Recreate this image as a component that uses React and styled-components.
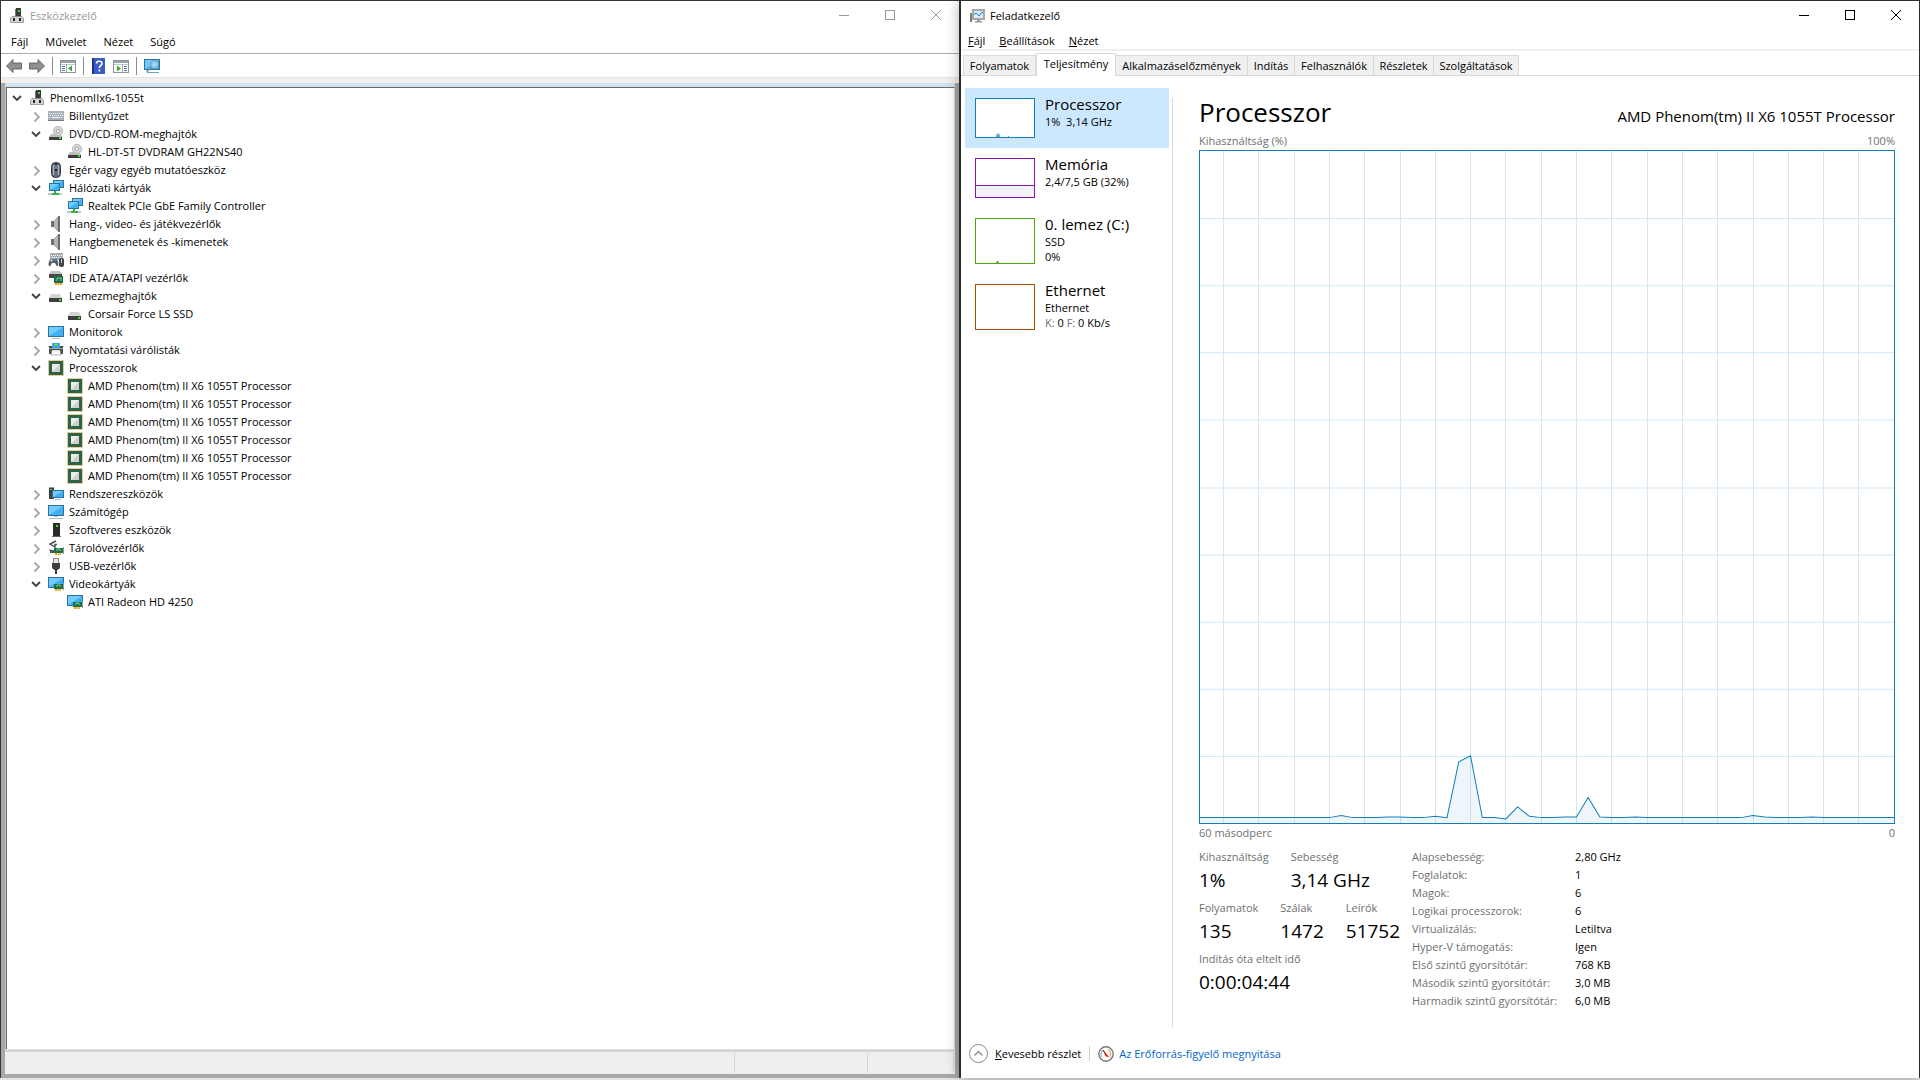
import React, { useState } from "react";
import styled, { createGlobalStyle } from "styled-components";

const Global = createGlobalStyle`
  * { box-sizing: border-box; }
  body { margin: 0; font-family: "Open Sans", "Noto Sans", sans-serif; font-size: 11px; color: #000; }
  button { font: inherit; color: inherit; background: none; border: 0; padding: 0; margin: 0; }
  ul { list-style: none; margin: 0; padding: 0; }
  h1, h2, p, dl, dd, dt { margin: 0; font-weight: 400; }
  svg { display: block; flex: none; }
`;

const Desktop = styled.div`
  display: grid;
  grid-template-columns: 1fr 1fr;
  gap: 2px;
  min-height: 100vh;
  padding: 1px 1px 0;
  background: #34382f;
  border-bottom: 2px solid #e4e4e4;
`;

const Window = styled.section`
  display: flex;
  flex-direction: column;
  min-width: 0;
  background: #fff;
  box-shadow: ${(p) => (p.$active ? "0 0 14px rgba(0, 0, 0, 0.4)" : "none")};
  z-index: ${(p) => (p.$active ? 1 : 0)};
`;

const TitleBar = styled.header`
  display: flex;
  align-items: center;
  height: 30px;
  padding-left: 8px;
  color: ${(p) => (p.$active ? "#000" : "#999")};
`;

const Title = styled.h1`
  flex: 1;
  padding: 0 0 2px 5px;
  font-size: 11px;
`;

const WindowButton = styled.button`
  display: grid;
  place-items: center;
  width: 46px;
  height: 30px;
  padding-bottom: 2px;
`;

const MenuBar = styled.nav`
  display: flex;
  align-items: center;
  height: ${(p) => p.$height}px;
  padding: 0 0 ${(p) => p.$bottom}px ${(p) => p.$start}px;
  gap: ${(p) => p.$gap}px;
  border-bottom: ${(p) => p.$line};
`;

/* Device manager */

const Toolbar = styled.div`
  display: flex;
  align-items: center;
  gap: 7px;
  height: 23px;
  padding-left: 5px;
`;

const ToolButton = styled.button`
  display: grid;
  place-items: center;
  min-width: 15px;
`;

const ToolSeparator = styled.span`
  width: 1px;
  height: 18px;
  background: #8c8c8c;
`;

const ToolBand = styled.div`
  height: 6px;
  background: #f0f0f0;
  border-top: 1px solid #e3e3e3;
`;

const Frame = styled.div`
  flex: 1;
  display: flex;
  flex-direction: column;
  padding: 0 4px 4px;
  background: #a8a8a8;
`;

const TreePane = styled.div`
  flex: 1;
  background: #fff;
  border-top: 4px solid #d3e0ee;
  border-left: 1px solid #c4c4c4;
  border-bottom: 1px solid #dcdcdc;
`;

const TreeList = styled.ul`
  height: 100%;
  padding-left: 2px;
  border-top: 1px solid #696969;
  border-left: 1px solid #696969;
  border-right: 1px solid #d8d8d8;
`;

const TreeRow = styled.li`
  display: flex;
  align-items: center;
  height: 18px;
  padding-left: ${(p) => p.$level * 19}px;
  white-space: nowrap;
  svg { margin-top: 2px; }
`;

const Expander = styled.button`
  display: grid;
  place-items: center;
  width: 16px;
  height: 16px;
  margin-right: 4px;
  visibility: ${(p) => (p.$leaf ? "hidden" : "visible")};
`;

const TreeLabel = styled.span`
  margin-left: 5px;
`;

const StatusBar = styled.footer`
  display: grid;
  grid-template-columns: 1fr 133px 86px;
  height: 24px;
  padding: 1px 1px 1px 0;
  background: #efefef;
  border-top: 2px solid #d4d4d4;
`;

const StatusCell = styled.span`
  border-right: 1px solid #d4d4d4;
`;

/* Task manager */

const Tabs = styled.div`
  display: flex;
  align-items: flex-end;
  height: 25px;
  padding-left: 2px;
  border-bottom: 1px solid #d9d9d9;
`;

const Tab = styled.button`
  height: ${(p) => (p.$active ? 23 : 20)}px;
  width: ${(p) => p.$width}px;
  margin-bottom: ${(p) => (p.$active ? -1 : 0)}px;
  padding-bottom: ${(p) => (p.$active ? 3 : 1)}px;
  white-space: nowrap;
  background: ${(p) => (p.$active ? "#fff" : "#f0f0f0")};
  border: 1px solid #d9d9d9;
  border-bottom: 0;
  border-left-width: ${(p) => (p.$first || p.$active ? 1 : 0)}px;
`;

const Body = styled.div`
  flex: 1;
  display: flex;
  padding: 12px 24px 0 4px;
`;

const Side = styled.ul`
  width: 204px;
`;

const SideButton = styled.button`
  display: flex;
  align-items: flex-start;
  gap: 10px;
  width: 100%;
  padding: 10px;
  text-align: left;
  background: ${(p) => (p.$selected ? "#cce8ff" : "transparent")};
`;

const SideText = styled.span`
  display: flex;
  flex-direction: column;
  margin-top: -4px;
  line-height: 15px;
  white-space: pre;
`;

const SideName = styled.span`
  font-size: 15px;
  line-height: 20px;
`;

const Muted = styled.span`
  color: #707070;
`;

const Divider = styled.div`
  width: 1px;
  margin: 10px 26px 0 3px;
  background: #d9d9d9;
`;

const Main = styled.main`
  flex: 1;
  display: flex;
  flex-direction: column;
  min-width: 0;
`;

const Heading = styled.div`
  display: flex;
  justify-content: space-between;
  align-items: baseline;
  height: 44px;
  line-height: 48px;
`;

const HeadingTitle = styled.h2`
  font-size: 26px;
`;

const HeadingModel = styled.p`
  font-size: 15px;
`;

const AxisRow = styled.div`
  display: flex;
  justify-content: space-between;
  line-height: 18px;
  color: #707070;
`;

const ChartBox = styled.div`
  flex: 1;
  display: flex;
  min-height: 300px;
  border: 1px solid #117dbb;
`;

const Stats = styled.div`
  display: flex;
  height: 185px;
  padding-top: 6px;
`;

const Figures = styled.dl`
  width: 213px;
`;

const FigureRow = styled.div`
  display: flex;
  gap: 22px;
  height: 51px;
`;

const Figure = styled.div`
  line-height: 18px;
`;

const FigureLabel = styled.dt`
  color: #707070;
`;

const FigureValue = styled.dd`
  font-size: 19px;
  line-height: 28px;
`;

const Details = styled.table`
  align-self: flex-start;
  border-collapse: collapse;
  th { width: 163px; font-weight: 400; text-align: left; color: #707070; }
  th, td { height: 18px; padding: 0; line-height: 18px; white-space: nowrap; }
`;

const Footer = styled.footer`
  display: flex;
  align-items: center;
  height: 51px;
  padding: 2px 0 0 8px;
`;

const FewerButton = styled.button`
  display: flex;
  align-items: center;
  gap: 7px;
`;

const FooterLine = styled.span`
  width: 1px;
  height: 15px;
  margin: 0 8px;
  background: #d0d0d0;
`;

const MonitorLink = styled.a`
  display: flex;
  align-items: center;
  gap: 5px;
  color: #0066cc;
  text-decoration: none;
`;

/* Icons, drawn on a 16 x 16 grid */

const Svg = ({ children, size = 16 }) => (
  <svg width={size} height={size} viewBox="0 0 16 16" aria-hidden="true">{children}</svg>
);

const Screen = ({ x = 0, y = 2, w = 16, h = 10 }) => (
  <>
    <rect x={x} y={y} width={w} height={h} fill="#2d7396" />
    <rect x={x + 1} y={y + 1} width={w - 2} height={h - 2} fill="#3fb0f5" />
    <path d={`M${x + 1} ${y + 1}h${w - 2}L${x + 1} ${y + h - 1}z`} fill="#72cbfb" />
  </>
);

const Card = () => (
  <>
    <rect x="6" y="8" width="9" height="5" fill="#1e6f43" />
    <path d="M15.500 7v7" stroke="#9a9a9a" />
    <path d="M9 11V9h3v2" fill="none" stroke="#6fd09a" />
    <path d="M7 14h6" stroke="#f3a41b" strokeWidth="2" strokeDasharray="2 .5" />
  </>
);

const icons = {
  computer: (
    <>
      <rect x="7" y="0" width="5" height="9" fill="#3a3a3a" />
      <path d="M6.500 1v8" stroke="#777" />
      <rect x="9" y="2" width="2" height="2" fill="#3ddb3d" />
      <path d="M3 8.500h10l1.500 2v4h-13v-4z" fill="#d3d5d8" stroke="#8b8b8b" strokeWidth=".8" />
      <rect x="4" y="10" width="2" height="3" fill="#222" />
      <rect x="10" y="10" width="2" height="3" fill="#222" />
    </>
  ),
  keyboard: (
    <>
      <rect y="3" width="16" height="10" fill="#6f7a83" />
      <rect y="3" width="16" height="9" fill="#a9b3bb" />
      <path d="M1 5.500h14M2 7.500h13M1 9.500h2M13 9.500h2" stroke="#f4f6f7" strokeDasharray="1 1" />
      <path d="M4 9.500h8" stroke="#f4f6f7" />
    </>
  ),
  dvd: (
    <>
      <circle cx="10" cy="5" r="4.700" fill="#d3d3d3" stroke="#a5a5a5" strokeWidth=".6" />
      <circle cx="10" cy="5" r="1.600" fill="#fff" stroke="#909090" strokeWidth=".7" />
      <path d="M3 8h5l2 1h3l1 2H1z" fill="#bcbcbc" />
      <rect x="1" y="11" width="13" height="3" fill="#3d3d3d" />
      <rect x="11" y="11" width="2" height="2" fill="#36e04c" />
    </>
  ),
  mouse: (
    <>
      <rect x="3.500" y=".5" width="9" height="15" rx="4" fill="#66707b" stroke="#30353b" />
      <path d="M5.500 3v10M10.500 3v10" stroke="#aeb8c2" />
      <rect x="7" y="1" width="2" height="8" fill="#1d2126" />
      <rect x="7.500" y="3" width="1" height="4" fill="#d2dae2" />
    </>
  ),
  network: (
    <>
      <Screen x={5} y={0} w={11} h={8} />
      <Screen x={1} y={3} w={11} h={8} />
      <path d="M0 14h14" stroke="#c4c4c4" strokeWidth="2" />
      <path d="M7 11v3M4 14h7" stroke="#37b04a" strokeWidth="2" />
    </>
  ),
  speaker: (
    <>
      <path d="M3 5h3v6H3z" fill="#6f6f6f" />
      <path d="M6 5l4-4v14l-4-4z" fill="#b8b8b8" stroke="#8f8f8f" strokeWidth=".6" />
      <rect x="10" y="0" width="2" height="16" fill="#6d6d6d" />
    </>
  ),
  hid: (
    <>
      <rect x="2" y="1" width="13" height="7" fill="#a9adb1" />
      <path d="M3 3.500h11M4 5.500h10" stroke="#fff" strokeDasharray="1 1" />
      <path d="M1 14c-1-1 0-7 2-7h5c2 0 3 6 2 7s-2-1-3-3H4c-1 2-2 4-3 3z" fill="#596069" />
      <circle cx="3.500" cy="8.500" r="1" fill="#e9eef3" />
      <circle cx="6.500" cy="7.500" r="1" fill="#2a9be8" />
      <rect x="11" y="6" width="5" height="9" rx="2" fill="#3d444c" />
      <path d="M13.500 7v4" stroke="#cdd5dc" />
    </>
  ),
  ide: (
    <>
      <path d="M3 1h9l2 3H1z" fill="#c4c4c4" />
      <rect x="1" y="4" width="13" height="4" fill="#474747" />
      <rect x="6" y="6" width="9" height="7" fill="#1e6f43" />
      <path d="M9 11V8h4v3" fill="none" stroke="#6fd09a" />
      <path d="M7 14h7" stroke="#f3a41b" strokeWidth="2" strokeDasharray="2 .5" />
    </>
  ),
  drive: (
    <>
      <path d="M3 6h9l2 4H1z" fill="#d3d3d3" />
      <rect x="1" y="10" width="13" height="4" fill="#3d3d3d" />
      <rect x="11" y="11" width="2" height="2" fill="#36e04c" />
    </>
  ),
  monitor: (
    <>
      <Screen y={2} h={11} />
      <path d="M4 14.500h8" stroke="#9ec3d8" />
    </>
  ),
  printer: (
    <>
      <path d="M0 4.500h4M12 4.500h4" stroke="#aeb3b8" />
      <path d="M1 4h14v8H1z" fill="#4b5056" />
      <rect x="4" y="1" width="8" height="5" fill="#3fa6ee" />
      <path d="M6 2h4v2H6z" fill="#59cf56" />
      <rect x="1" y="6" width="14" height="1" fill="#9da2a7" />
      <path d="M4 8h8l1 5H3z" fill="#fff" stroke="#777" strokeWidth=".6" />
    </>
  ),
  cpu: (
    <>
      <rect x=".5" y=".5" width="15" height="15" fill="none" stroke="#c89a3a" strokeDasharray="1 1" />
      <rect x="1" y="1" width="14" height="14" fill="#2d6448" />
      <rect x="4" y="4" width="8" height="8" fill="#cfcfcf" />
      <path d="M4 4h8L4 12z" fill="#ebebeb" />
    </>
  ),
  system: (
    <>
      <rect x="1" y="1" width="5" height="12" fill="#404040" />
      <path d="M1 1.500h5" stroke="#999" />
      <rect x="2" y="3" width="2" height="1" fill="#36e04c" />
      <Screen x={4} y={4} w={12} h={8} />
      <path d="M7 13.500h6" stroke="#9ec3d8" />
    </>
  ),
  pc: (
    <>
      <Screen y={1} h={11} />
      <path d="M6 12.500h4M1 14.500h14" stroke="#a9bccb" />
    </>
  ),
  software: (
    <>
      <rect x="5" y="1" width="7" height="13" fill="#2b2b2b" />
      <rect x="8" y="3" width="2" height="2" fill="#36e04c" />
      <path d="M4 14.500h9" stroke="#666" />
    </>
  ),
  storage: (
    <>
      <path d="M8 1L2 4l5 3V4.500h2" fill="none" stroke="#4b4b4b" strokeWidth="1.400" />
      <path d="M2 9l3 2H1z" fill="#777" />
      <rect x="2" y="10" width="6" height="3" fill="#555" />
      <Card />
    </>
  ),
  usb: (
    <>
      <rect x="5.500" y=".5" width="5" height="5" fill="#e5e5e5" stroke="#8a8a8a" />
      <path d="M4 5h8v4c0 2-2 2-2.500 3h-3C6 11 4 11 4 9z" fill="#3c3c3c" />
      <rect x="7" y="11" width="2" height="5" fill="#3c3c3c" />
    </>
  ),
  video: (
    <>
      <Screen y={1} h={11} />
      <Card />
    </>
  ),
};

const Chevron = ({ open }) => (
  <svg width="12" height="12" viewBox="0 0 12 12" aria-hidden="true">
    <path
      d={open ? "M2 4l4 4 4-4" : "M4.500 2.500L9 7l-4.500 4.500"}
      fill="none"
      stroke={open ? "#404040" : "#a6a6a6"}
      strokeWidth="1.800"
    />
  </svg>
);

const WindowButtons = () => (
  <>
    <WindowButton aria-label="Kis méret">
      <svg width="10" height="10"><path d="M0 5.500h10" stroke="currentColor" /></svg>
    </WindowButton>
    <WindowButton aria-label="Teljes méret">
      <svg width="10" height="10"><rect x=".5" y=".5" width="9" height="9" fill="none" stroke="currentColor" /></svg>
    </WindowButton>
    <WindowButton aria-label="Bezárás">
      <svg width="10" height="10"><path d="M0 0l10 10M10 0L0 10" stroke="currentColor" /></svg>
    </WindowButton>
  </>
);

const Arrow = ({ back }) => (
  <Svg>
    <path
      d="M.5 8L7 1.500v3.500h8.500v6H7v3.500z"
      transform={back ? undefined : "matrix(-1 0 0 1 16 0)"}
      fill="#909090"
      stroke="#5f5f5f"
      strokeWidth=".9"
    />
  </Svg>
);

const PanelIcon = ({ right }) => (
  <Svg>
    <rect x=".5" y="2.500" width="15" height="12" fill="#fff" stroke="#8d949c" />
    <path d="M1 4h14" stroke="#9ba3ab" strokeWidth="2" />
    <path d="M1 6.500h14" stroke="#c3c9cf" />
    <path d={right ? "M9.500 6v8" : "M6.500 6v8"} stroke="#a3a9af" />
    <path d={right ? "M11 8.500h3M11 10.500h3M11 12.500h3" : "M2 8.500h3M2 10.500h3M2 12.500h3"} stroke="#5b7ea6" />
    <path d={right ? "M4 7.500l4 3-4 3z" : "M12 7.500l-4 3 4 3z"} fill="#35a935" />
  </Svg>
);

const HelpIcon = () => (
  <svg width="13" height="16" viewBox="0 0 13 16" aria-hidden="true">
    <rect width="13" height="16" fill="#3a5cc4" />
    <path d="M1 0v16" stroke="#1d3580" strokeWidth="2" />
    <path d="M4.500 5.500c0-3 5.500-3 5.500 0 0 2-2.600 2-2.600 4.500M7.400 11.500v2" fill="none" stroke="#fff" strokeWidth="1.600" />
  </svg>
);

const ScanIcon = () => (
  <Svg>
    <Screen y={1} h={11} />
    <path d="M3 14.500h12" stroke="#6ba3c4" />
    <circle cx="10.500" cy="6.500" r="4" fill="#8fd4fc" stroke="#7c8b95" />
    <path d="M7.500 9.500L2.500 14" stroke="#7c8b95" strokeWidth="1.600" />
  </Svg>
);

const TaskIcon = () => (
  <Svg>
    <path d="M1 5h2v9H1z" fill="#7d7d7d" />
    <path d="M1.500 5v2" stroke="#42c842" />
    <rect x="4" y="2" width="11" height="9" fill="#d8f0fb" stroke="#a6a6a6" strokeWidth="2" />
    <path d="M5 6.500L7 5l3 3 3-4 1 1" fill="none" stroke="#1587c9" />
    <path d="M8 12h3v1h2v1.500H6V13h2z" fill="#9a9a9a" />
  </Svg>
);

const GaugeIcon = () => (
  <Svg>
    <circle cx="8" cy="8" r="7.200" fill="#fff" stroke="#7a7a7a" strokeWidth="1.400" />
    <path d="M4 11a5 5 0 0 1 1-7" fill="none" stroke="#74b7d9" strokeWidth="1.200" />
    <path d="M10 3.800a5 5 0 0 1 1.500 7.500" fill="none" stroke="#f09a3c" strokeWidth="1.200" />
    <path d="M5 4l5 6.500-2-.5z" fill="#d81e1e" stroke="#d81e1e" />
  </Svg>
);

/* Content */

const cpuName = "AMD Phenom(tm) II X6 1055T Processor";

const devices = [
  ["Billentyűzet", "keyboard"],
  ["DVD/CD-ROM-meghajtók", "dvd", ["HL-DT-ST DVDRAM GH22NS40"]],
  ["Egér vagy egyéb mutatóeszköz", "mouse"],
  ["Hálózati kártyák", "network", ["Realtek PCIe GbE Family Controller"]],
  ["Hang-, video- és játékvezérlők", "speaker"],
  ["Hangbemenetek és -kimenetek", "speaker"],
  ["HID", "hid"],
  ["IDE ATA/ATAPI vezérlők", "ide"],
  ["Lemezmeghajtók", "drive", ["Corsair Force LS SSD"]],
  ["Monitorok", "monitor"],
  ["Nyomtatási várólisták", "printer"],
  ["Processzorok", "cpu", Array(6).fill(cpuName)],
  ["Rendszereszközök", "system"],
  ["Számítógép", "pc"],
  ["Szoftveres eszközök", "software"],
  ["Tárolóvezérlők", "storage"],
  ["USB-vezérlők", "usb"],
  ["Videokártyák", "video", ["ATI Radeon HD 4250"]],
];

const tabs = [
  ["Folyamatok", 73],
  ["Teljesítmény", 80],
  ["Alkalmazáselőzmények", 132],
  ["Indítás", 47],
  ["Felhasználók", 79],
  ["Részletek", 60],
  ["Szolgáltatások", 85],
];

const details = [
  ["Alapsebesség:", "2,80 GHz"],
  ["Foglalatok:", "1"],
  ["Magok:", "6"],
  ["Logikai processzorok:", "6"],
  ["Virtualizálás:", "Letiltva"],
  ["Hyper-V támogatás:", "Igen"],
  ["Első szintű gyorsítótár:", "768 KB"],
  ["Második szintű gyorsítótár:", "3,0 MB"],
  ["Harmadik szintű gyorsítótár:", "6,0 MB"],
];

/* CPU load in percent, one sample each second, oldest first */
const load = Array(60).fill(0.8);
Object.assign(load, {
  12: 1.1, 16: 0.9, 17: 0.9, 20: 1, 22: 9.1, 23: 10, 26: 0.6, 27: 2.4, 28: 1,
  31: 0.9, 32: 0.9, 33: 3.8, 34: 0.9, 37: 0.9, 47: 1.1, 48: 0.9, 52: 0.9,
});

const Chart = () => {
  const points = load.map((v, i) => `${(i * 694) / 59},${671 - v * 6.71}`).join(" ");
  return (
    <svg width="100%" height="100%" viewBox="0 0 694 671" preserveAspectRatio="none" role="img" aria-label="Kihasználtság">
      <g stroke="#d3e8f5">
        {Array.from({ length: 9 }, (_, i) => (
          <path key={i} d={`M0 ${Math.round((i + 1) * 67.1) + 0.5}H694`} />
        ))}
        {Array.from({ length: 19 }, (_, i) => (
          <path key={i} d={`M${Math.round(23 + i * 35.3) + 0.5} 0V671`} />
        ))}
      </g>
      <polygon points={`0,671 ${points} 694,671`} fill="#117dbb" fillOpacity=".07" />
      <polyline points={points} fill="none" stroke="#117dbb" />
    </svg>
  );
};

const Thumb = ({ color, height, children }) => (
  <svg width="60" height={height} viewBox={`0 0 60 ${height}`} aria-hidden="true">
    <rect x=".5" y=".5" width="59" height={height - 1} fill="#fff" stroke={color} />
    {children}
  </svg>
);

const resources = [
  {
    name: "Processzor",
    lines: ["1%  3,14 GHz"],
    thumb: (
      <Thumb color="#117dbb" height={40}>
        <path d="M21 39l1-3h2l1 3z" fill="#6ab0d8" stroke="#4a9fce" strokeWidth=".6" />
        <path d="M33 38.500h1" stroke="#4a9fce" />
      </Thumb>
    ),
  },
  {
    name: "Memória",
    lines: ["2,4/7,5 GB (32%)"],
    thumb: (
      <Thumb color="#8b12ae" height={40}>
        <rect x="1" y="28" width="58" height="11" fill="#f4f2f4" />
        <path d="M1 27.500h58" stroke="#8b12ae" />
      </Thumb>
    ),
  },
  {
    name: "0. lemez (C:)",
    lines: ["SSD", "0%"],
    thumb: (
      <Thumb color="#4da60c" height={46}>
        <path d="M21 45l1-2h1l1 2z" fill="#4da60c" />
      </Thumb>
    ),
  },
  {
    name: "Ethernet",
    lines: ["Ethernet", <><Muted>K:</Muted> 0 <Muted>F:</Muted> 0 Kb/s</>],
    thumb: <Thumb color="#a74f01" height={46} />,
  },
];

const DeviceGroup = ({ name, icon, items }) => {
  const [open, setOpen] = useState(Boolean(items));
  return (
    <>
      <TreeRow $level={1}>
        <Expander aria-label={name} aria-expanded={open} onClick={() => setOpen(!open)}>
          <Chevron open={open} />
        </Expander>
        <Svg>{icons[icon]}</Svg>
        <TreeLabel>{name}</TreeLabel>
      </TreeRow>
      {open && items && items.map((item, i) => (
        <TreeRow key={i} $level={2}>
          <Expander as="span" $leaf />
          <Svg>{icons[icon]}</Svg>
          <TreeLabel>{item}</TreeLabel>
        </TreeRow>
      ))}
    </>
  );
};

const DeviceManager = () => (
  <Window>
    <TitleBar>
      <Svg>{icons.computer}</Svg>
      <Title>Eszközkezelő</Title>
      <WindowButtons />
    </TitleBar>
    <MenuBar $height={23} $start={10} $bottom={2} $gap={17} $line="1px solid #a9adb0">
      {["Fájl", "Művelet", "Nézet", "Súgó"].map((m) => <button key={m}>{m}</button>)}
    </MenuBar>
    <Toolbar>
      <ToolButton aria-label="Vissza"><Arrow back /></ToolButton>
      <ToolButton aria-label="Előre"><Arrow /></ToolButton>
      <ToolSeparator />
      <ToolButton aria-label="Konzolfa"><PanelIcon /></ToolButton>
      <ToolSeparator />
      <ToolButton aria-label="Súgó megnyitása"><HelpIcon /></ToolButton>
      <ToolButton aria-label="Műveletpanel"><PanelIcon right /></ToolButton>
      <ToolSeparator />
      <ToolButton aria-label="Hardverváltozások keresése"><ScanIcon /></ToolButton>
    </Toolbar>
    <ToolBand />
    <Frame>
      <TreePane>
        <TreeList>
          <TreeRow $level={0}>
            <Expander aria-label="PhenomIIx6-1055t" aria-expanded="true"><Chevron open /></Expander>
            <Svg>{icons.computer}</Svg>
            <TreeLabel>PhenomIIx6-1055t</TreeLabel>
          </TreeRow>
          {devices.map(([name, icon, items]) => (
            <DeviceGroup key={name} name={name} icon={icon} items={items} />
          ))}
        </TreeList>
      </TreePane>
      <StatusBar><StatusCell /><StatusCell /><StatusCell /></StatusBar>
    </Frame>
  </Window>
);

const TaskManager = () => {
  const [selected, setSelected] = useState(0);
  return (
    <Window $active>
      <TitleBar $active>
        <TaskIcon />
        <Title>Feladatkezelő</Title>
        <WindowButtons />
      </TitleBar>
      <MenuBar $height={20} $start={7} $bottom={0} $gap={14} $line="2px solid #f0f0f0">
        {["Fájl", "Beállítások", "Nézet"].map((m) => <button key={m}><u>{m[0]}</u>{m.slice(1)}</button>)}
      </MenuBar>
      <Tabs role="tablist">
        {tabs.map(([name, width], i) => (
          <Tab key={name} role="tab" aria-selected={i === 1} $active={i === 1} $first={i === 0} $width={width}>
            {name}
          </Tab>
        ))}
      </Tabs>
      <Body>
        <Side>
          {resources.map((r, i) => (
            <li key={r.name}>
              <SideButton $selected={i === selected} onClick={() => setSelected(i)}>
                {r.thumb}
                <SideText>
                  <SideName>{r.name}</SideName>
                  {r.lines.map((line, n) => <span key={n}>{line}</span>)}
                </SideText>
              </SideButton>
            </li>
          ))}
        </Side>
        <Divider />
        <Main>
          <Heading>
            <HeadingTitle>Processzor</HeadingTitle>
            <HeadingModel>{cpuName}</HeadingModel>
          </Heading>
          <AxisRow><span>Kihasználtság (%)</span><span>100%</span></AxisRow>
          <ChartBox><Chart /></ChartBox>
          <AxisRow><span>60 másodperc</span><span>0</span></AxisRow>
          <Stats>
            <Figures>
              <FigureRow>
                <Figure><FigureLabel>Kihasználtság</FigureLabel><FigureValue>1%</FigureValue></Figure>
                <Figure><FigureLabel>Sebesség</FigureLabel><FigureValue>3,14 GHz</FigureValue></Figure>
              </FigureRow>
              <FigureRow>
                <Figure><FigureLabel>Folyamatok</FigureLabel><FigureValue>135</FigureValue></Figure>
                <Figure><FigureLabel>Szálak</FigureLabel><FigureValue>1472</FigureValue></Figure>
                <Figure><FigureLabel>Leírók</FigureLabel><FigureValue>51752</FigureValue></Figure>
              </FigureRow>
              <FigureRow>
                <Figure><FigureLabel>Indítás óta eltelt idő</FigureLabel><FigureValue>0:00:04:44</FigureValue></Figure>
              </FigureRow>
            </Figures>
            <Details>
              <tbody>
                {details.map(([k, v]) => <tr key={k}><th scope="row">{k}</th><td>{v}</td></tr>)}
              </tbody>
            </Details>
          </Stats>
        </Main>
      </Body>
      <Footer>
        <FewerButton>
          <svg width="19" height="19" viewBox="0 0 19 19" aria-hidden="true">
            <circle cx="9.500" cy="9.500" r="9" fill="#fff" stroke="#8a8a8a" />
            <path d="M5.500 11.500l4-4 4 4" fill="none" stroke="#8a8a8a" strokeWidth="1.300" />
          </svg>
          <span><u>K</u>evesebb részlet</span>
        </FewerButton>
        <FooterLine />
        <MonitorLink href="#eroforras-figyelo"><GaugeIcon />Az Erőforrás-figyelő megnyitása</MonitorLink>
      </Footer>
    </Window>
  );
};

export default function App() {
  return (
    <>
      <Global />
      <Desktop>
        <DeviceManager />
        <TaskManager />
      </Desktop>
    </>
  );
}
